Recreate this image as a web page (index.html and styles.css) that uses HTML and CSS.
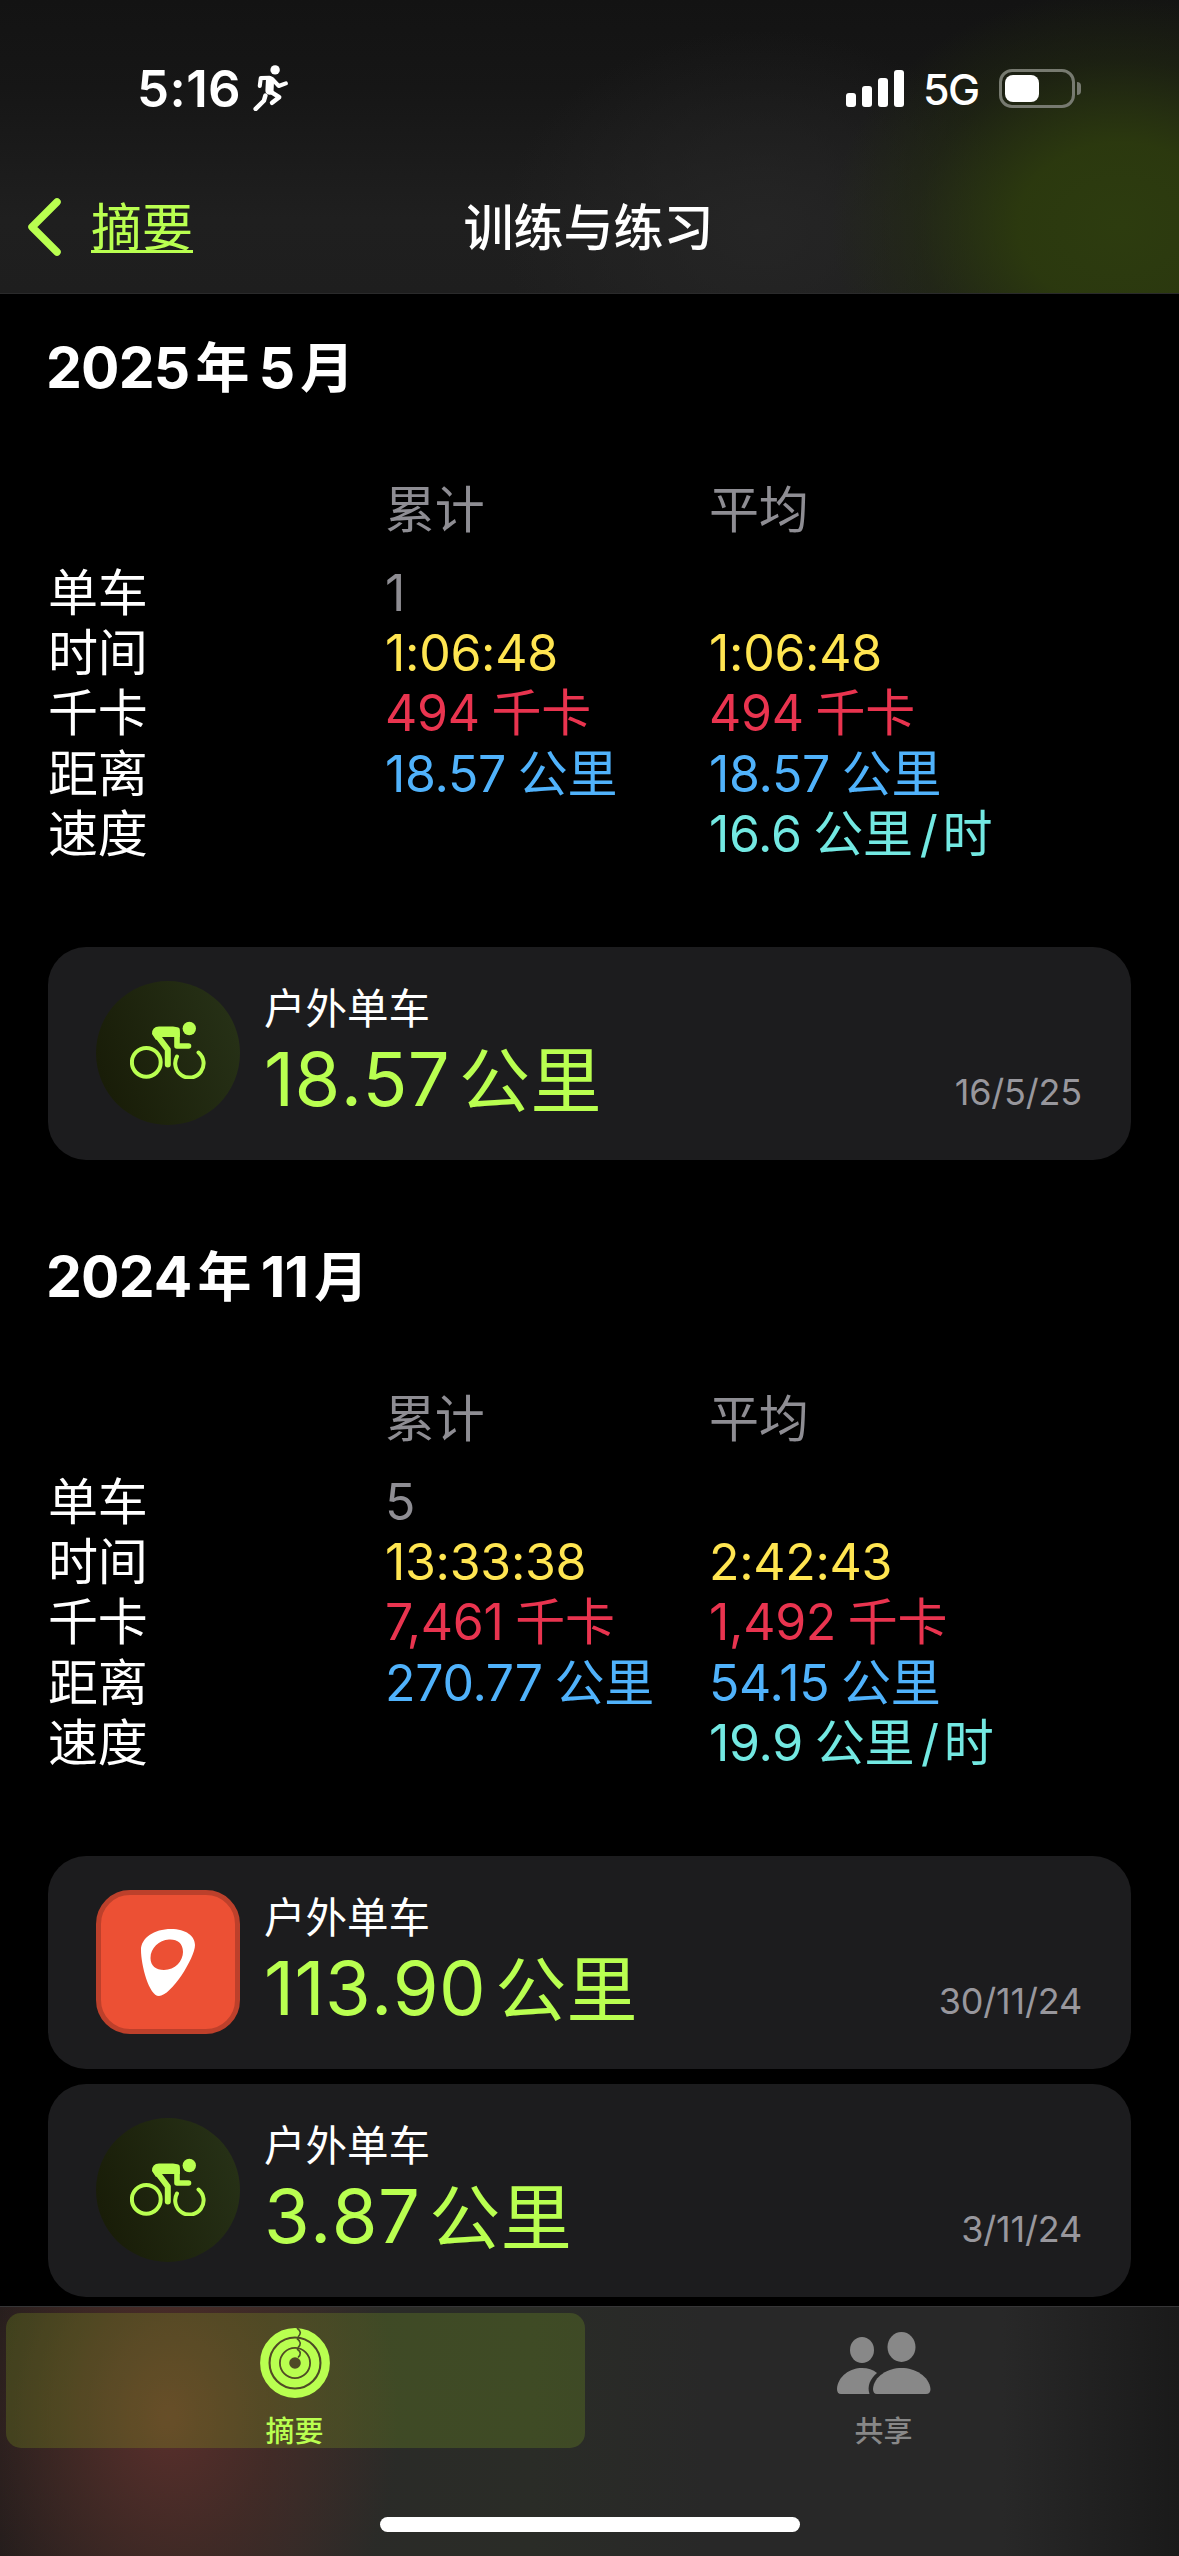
FILE: index.html
```html
<!DOCTYPE html>
<html lang="zh-CN">
<head>
    <meta charset="UTF-8">
    <meta name="viewport" content="width=device-width, initial-scale=1.0">
    <title>训练与练习</title>
    <link rel="stylesheet" href="styles.css">
</head>
<body>

    <!-- Shared icons -->
    <svg class="sprite">
        <symbol id="bike" viewBox="0 0 76 58">
            <g fill="none" stroke="currentColor" stroke-linecap="round" stroke-linejoin="round">
                <circle cx="16.300" cy="41.300" r="14.400" stroke-width="4"/>
                <path d="M47 35.500 A14.200 14.200 0 1 0 68.500 31.500" stroke-width="4"/>
                <path d="M47 9 V25 H58.500" stroke-width="5.600"/>
                <path d="M26 13 L37.800 28.500 V43.500" stroke-width="6"/>
            </g>
            <path d="M29 5.500 H43 Q49.800 5.500 49.800 12 V16 H31 L26 19 L22 13 Q22 5.500 29 5.500 Z" fill="currentColor"/>
            <circle cx="59.300" cy="7.500" r="6.700" fill="currentColor"/>
        </symbol>
    </svg>

    <!-- Header Section -->
    <div class="header">
        <div class="status-bar">
            <div class="status-left">
                <span class="clock">5:16</span>
                <svg class="runner" viewBox="0 0 34 45">
                    <circle cx="21.500" cy="4.800" r="4.600" fill="#fff"/>
                    <g fill="none" stroke="#fff" stroke-linecap="round" stroke-linejoin="round">
                        <path d="M6.500 20.500 L7.500 12.800 L16 12.500" stroke-width="4"/>
                        <path d="M19 14 L25 20.500 L32 18" stroke-width="4"/>
                        <path d="M16.500 15 L16 25" stroke-width="8"/>
                        <path d="M17 26 L25.500 31.500 L18.500 37" stroke-width="4.400"/>
                        <path d="M12 30 L10.500 35 L2.500 43" stroke-width="4.400"/>
                    </g>
                </svg>
            </div>
            <div class="status-right">
                <div class="signal">
                    <span class="bar bar-1"></span>
                    <span class="bar bar-2"></span>
                    <span class="bar bar-3"></span>
                    <span class="bar bar-4"></span>
                </div>
                <span class="network">5G</span>
                <div class="battery"><div class="battery-level"></div></div>
                <div class="battery-cap"></div>
            </div>
        </div>
        <div class="nav-bar">
            <a class="back" href="#">
                <svg class="chevron" viewBox="0 0 34 58">
                    <path d="M29 4 L4 29 L29 54" fill="none" stroke="#b9ff50" stroke-width="7.500" stroke-linecap="round" stroke-linejoin="round"/>
                </svg>
                <span class="back-text">摘要</span>
            </a>
            <h1>训练与练习</h1>
        </div>
    </div>

    <!-- Workout List -->
    <div class="content">
        <div class="month">
            <h2>2025<span class="year">年</span>5<span class="mon">月</span></h2>
            <div class="summary">
                <span></span><span class="gray">累计</span><span class="gray">平均</span>
                <span>单车</span><span class="gray">1</span><span></span>
                <span>时间</span><span class="time">1:06:48</span><span class="time">1:06:48</span>
                <span>千卡</span><span class="energy">494 千卡</span><span class="energy">494 千卡</span>
                <span>距离</span><span class="distance">18.57 公里</span><span class="distance">18.57 公里</span>
                <span>速度</span><span></span><span class="speed">16.6 公里<i class="slash">/</i>时</span>
            </div>
            <div class="workout">
                <div class="workout-icon"><svg class="bike"><use href="#bike"/></svg></div>
                <div class="workout-info">
                    <span class="workout-name">户外单车</span>
                    <span class="workout-value">18.57<span class="unit">公里</span></span>
                </div>
                <span class="workout-date">16/5/25</span>
            </div>
        </div>

        <div class="month">
            <h2>2024<span class="year">年</span>11<span class="mon">月</span></h2>
            <div class="summary">
                <span></span><span class="gray">累计</span><span class="gray">平均</span>
                <span>单车</span><span class="gray">5</span><span></span>
                <span>时间</span><span class="time">13:33:38</span><span class="time">2:42:43</span>
                <span>千卡</span><span class="energy">7,461 千卡</span><span class="energy">1,492 千卡</span>
                <span>距离</span><span class="distance">270.77 公里</span><span class="distance">54.15 公里</span>
                <span>速度</span><span></span><span class="speed">19.9 公里<i class="slash">/</i>时</span>
            </div>
            <div class="workout">
                <div class="app-icon">
                    <svg class="pin" viewBox="0 0 54 67">
                        <path fill="#fff" fill-rule="evenodd" d="M30 0 C45 0 54 7 54 16 C54 29 30 67 18 67 C8 67 0 36 0 21 C0 9 13 0 30 0 Z M28 10.500 C18 11 9.500 19 9.500 29 C9.500 37 15 41 23 41 C34 41 42 32 42 23 C42 14 36 10 28 10.500 Z"/>
                    </svg>
                </div>
                <div class="workout-info">
                    <span class="workout-name">户外单车</span>
                    <span class="workout-value">113.90<span class="unit">公里</span></span>
                </div>
                <span class="workout-date">30/11/24</span>
            </div>
            <div class="workout">
                <div class="workout-icon"><svg class="bike"><use href="#bike"/></svg></div>
                <div class="workout-info">
                    <span class="workout-name">户外单车</span>
                    <span class="workout-value">3.87<span class="unit">公里</span></span>
                </div>
                <span class="workout-date">3/11/24</span>
            </div>
        </div>
    </div>

    <!-- Tab Bar -->
    <div class="tab-bar">
        <div class="tabs">
            <div class="tab active">
                <svg class="rings" viewBox="0 0 70 70">
                    <g fill="none" stroke="currentColor" stroke-width="8.400">
                        <circle cx="35" cy="35" r="30.700"/>
                        <circle cx="35" cy="35" r="20.200"/>
                        <circle cx="35" cy="35" r="10"/>
                    </g>
                    <g fill="none" stroke="#4b4f28" stroke-width="1.600">
                        <path d="M37 0 Q43 4.300 38 9"/>
                        <path d="M37 10.500 Q43 15 38 19.500"/>
                        <path d="M37 21 Q43 25 38 29.500"/>
                    </g>
                </svg>
                <span>摘要</span>
            </div>
            <div class="tab">
                <svg class="people" viewBox="0 0 94 71">
                    <g fill="currentColor">
                        <ellipse cx="25" cy="18" rx="12" ry="13"/>
                        <ellipse cx="64.500" cy="15" rx="14" ry="15"/>
                        <path d="M4 62 Q0 62 0 57 C1 44 13 36 25 36 Q34 36 40 41 C33 47 30 54 32.500 62 Z"/>
                        <path d="M40 62 Q36 62 36 57 C37 44 51 36 64.500 36 C78 36 92 44 93.500 57 Q93.500 62 89 62 Z"/>
                    </g>
                </svg>
                <span>共享</span>
            </div>
        </div>
        <div class="home-indicator"></div>
    </div>

</body>
</html>
```
FILE: styles.css
```css
/* Basic reset and styling */
* {
    margin: 0;
    padding: 0;
    box-sizing: border-box;
}

body {
    width: 1179px;
    height: 2556px;
    overflow: hidden;
    display: flex;
    flex-direction: column;
    background-color: #000;
    color: #fff;
    font-family: Inter, "Noto Sans CJK SC", sans-serif;
}

.sprite {
    display: none;
}

/* Header */
.header {
    height: 294px;
    flex-shrink: 0;
    border-bottom: 1px solid #2a2a2b;
    background:
        radial-gradient(ellipse 290px 235px at 1120px 225px, #2d3c0f 0%, rgba(44, 58, 14, 0.95) 35%, rgba(36, 46, 14, 0.45) 70%, rgba(30, 36, 18, 0) 100%),
        radial-gradient(ellipse 260px 200px at 760px 230px, rgba(38, 38, 38, 0.9), rgba(38, 38, 38, 0)),
        linear-gradient(#131313 0%, #161616 30%, #1f1f1f 75%, #1e1e1e 100%);
}

.status-bar {
    height: 176px;
    display: flex;
    justify-content: space-between;
    padding: 0 98px 0 137px;
}

.status-left, .status-right {
    display: flex;
    align-items: center;
}

.clock {
    font-size: 51px;
    font-weight: 600;
    letter-spacing: 0.4px;
}

.runner {
    width: 35px;
    height: 46px;
    margin-left: 12px;
}

.signal {
    display: flex;
    align-items: flex-end;
    gap: 6px;
}

.bar {
    width: 10px;
    background-color: #fff;
    border-radius: 3px;
}

.bar-1 {
    height: 14px;
}

.bar-2 {
    height: 21px;
}

.bar-3 {
    height: 29px;
}

.bar-4 {
    height: 37px;
}

.network {
    width: 56px;
    margin: 2px 20px 0 19px;
    font-size: 43px;
    font-weight: 500;
    letter-spacing: -1.5px;
}

.battery {
    width: 76px;
    height: 39px;
    padding: 3px;
    border: 3px solid #777a70;
    border-radius: 13px;
}

.battery-level {
    width: 34px;
    height: 27px;
    border-radius: 8px;
    background-color: #fff;
}

.battery-cap {
    width: 4px;
    height: 13px;
    margin-left: 2px;
    border-radius: 0 5px 5px 0;
    background-color: #777a70;
}

.nav-bar {
    height: 102px;
    display: grid;
    grid-template-columns: 1fr auto 1fr;
    align-items: center;
    padding: 0 28px;
}

.back {
    display: flex;
    align-items: center;
    color: #b9ff50;
    text-decoration: none;
}

.chevron {
    width: 34px;
    height: 58px;
}

.back-text {
    height: 51px;
    line-height: 51px;
    margin-left: 29px;
    font-size: 51px;
    border-bottom: 3px solid #b9ff50;
}

.nav-bar h1 {
    padding-top: 2px;
    margin-left: -2px;
    font-size: 50px;
    line-height: 60px;
    font-weight: 500;
}

/* Month sections */
.content {
    flex: 1;
    min-height: 0;
    overflow: hidden;
    padding: 0 48px;
}

.month {
    height: 909px;
}

.month h2 {
    height: 149px;
    margin-left: -2px;
    padding-top: 36px;
    font-size: 57px;
    line-height: 76px;
    font-weight: 700;
    font-kerning: none;
    letter-spacing: -0.8px;
}

.year {
    margin: 0 10px 0 6px;
    font-size: 54px;
}

.mon {
    margin-left: 6px;
    font-size: 54px;
}

.summary {
    height: 504px;
    padding: 37px 0 0;
    display: grid;
    grid-template-columns: 337px 324px 1fr;
    grid-template-rows: 83px repeat(5, 60.2px);
    align-content: start;
    font-size: 50px;
    line-height: 60px;
    letter-spacing: -0.3px;
    word-spacing: -2px;
    white-space: nowrap;
}

.gray {
    color: #8e8d93;
}

.time {
    color: #ffe551;
}

.energy {
    color: #e9344f;
}

.distance {
    color: #50b2fb;
}

.speed {
    color: #73e8e2;
}

.slash {
    margin: 0 5px 0 7px;
    font-style: normal;
}

/* Workout cards */
.workout {
    height: 213px;
    margin-bottom: 15px;
    padding: 0 48px 1px;
    display: flex;
    align-items: center;
    background-color: #1c1c1e;
    border-radius: 38px;
}

.workout-icon {
    width: 144px;
    height: 144px;
    border-radius: 50%;
    display: flex;
    align-items: center;
    justify-content: center;
    background: linear-gradient(70deg, #171a06, #283318);
    color: #b9ff50;
}

.bike {
    width: 76px;
    height: 58px;
    margin-top: -6px;
}

.app-icon {
    width: 144px;
    height: 144px;
    display: flex;
    align-items: center;
    justify-content: center;
    background-color: #ec5034;
    border: 5px solid #bd402b;
    border-radius: 34px;
}

.pin {
    width: 54px;
    height: 67px;
}

.workout-info {
    display: flex;
    flex-direction: column;
    margin-left: 24px;
}

.workout-name {
    padding-top: 1px;
    font-size: 41.5px;
    line-height: 52px;
}

.workout-value {
    height: 90px;
    font-size: 74px;
    line-height: 89px;
    font-kerning: none;
    letter-spacing: 0.4px;
    color: #b9ff50;
}

.unit {
    margin-left: 9px;
    font-size: 71px;
}

.workout-date {
    margin-left: auto;
    margin-top: 77px;
    margin-right: 1px;
    font-size: 36px;
    letter-spacing: -0.2px;
    color: #98979d;
}

/* Tab bar */
.tab-bar {
    height: 250px;
    flex-shrink: 0;
    border-top: 1px solid #353536;
    background:
        radial-gradient(ellipse 230px 300px at 168px 110px, rgba(92, 48, 44, 0.95) 0%, rgba(76, 44, 39, 0.7) 45%, rgba(40, 30, 28, 0) 100%),
        linear-gradient(90deg, #1c1a1a 0%, #2a2a28 25%, #2a2c27 45%, #282828 60%, #282828 85%, #1a1a1a 100%);
}

.tabs {
    height: 141px;
    display: flex;
    padding: 6px 6px 0;
    gap: 9px;
}

.tab {
    width: 579px;
    height: 135px;
    display: flex;
    flex-direction: column;
    align-items: center;
    justify-content: space-between;
    padding: 15px 0 0;
    border-radius: 15px;
    color: #888;
    font-size: 29px;
    line-height: 32px;
    font-weight: 500;
}

.tab.active {
    padding-right: 2px;
    background-color: rgba(185, 255, 30, 0.15);
    color: #b9ff50;
}

.rings {
    width: 70px;
    height: 70px;
}

.people {
    width: 94px;
    height: 71px;
    margin-top: 4px;
}

.home-indicator {
    width: 420px;
    height: 15px;
    margin: 69px auto 0;
    border-radius: 8px;
    background-color: #fff;
}
```
